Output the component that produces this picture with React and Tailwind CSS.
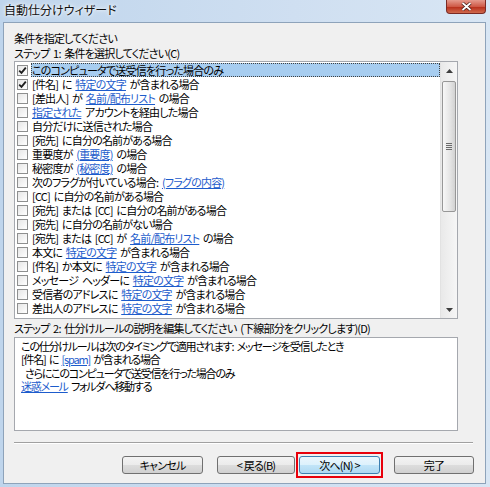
import React from "react";

const L = ({ children }) => (
  <span className="text-[#1d5ccc] underline decoration-[#1d5ccc] underline-offset-[1px]">{children}</span>
);

const conditions = [
  { checked: true, selected: true, text: <>このコンピュータで送受信を行った場合のみ</> },
  { checked: true, text: <>[件名] に <L>特定の文字</L> が含まれる場合</> },
  { text: <>[差出人] が <L>名前/配布リスト</L> の場合</> },
  { text: <><L>指定された</L> アカウントを経由した場合</> },
  { text: <>自分だけに送信された場合</> },
  { text: <>[宛先] に自分の名前がある場合</> },
  { text: <>重要度が <L>(重要度)</L> の場合</> },
  { text: <>秘密度が <L>(秘密度)</L> の場合</> },
  { text: <>次のフラグが付いている場合: <L>(フラグの内容)</L></> },
  { text: <>[CC] に自分の名前がある場合</> },
  { text: <>[宛先] または [CC] に自分の名前がある場合</> },
  { text: <>[宛先] に自分の名前がない場合</> },
  { text: <>[宛先] または [CC] が <L>名前/配布リスト</L> の場合</> },
  { text: <>本文に <L>特定の文字</L> が含まれる場合</> },
  { text: <>[件名] か本文に <L>特定の文字</L> が含まれる場合</> },
  { text: <>メッセージ ヘッダーに <L>特定の文字</L> が含まれる場合</> },
  { text: <>受信者のアドレスに <L>特定の文字</L> が含まれる場合</> },
  { text: <>差出人のアドレスに <L>特定の文字</L> が含まれる場合</> },
];

function CheckBox({ checked }) {
  return (
    <span className="ml-[2px] flex h-[11px] w-[11px] shrink-0 items-center justify-center border border-[#8e8f8f] bg-[linear-gradient(135deg,#e6e6e6,#ffffff)]">
      {checked && (
        <svg width="9" height="9" viewBox="0 0 9 9">
          <path d="M1.2 4.6 L3.5 6.9 L7.8 1.6" fill="none" stroke="#202020" strokeWidth="1.8" />
        </svg>
      )}
    </span>
  );
}

function Arrow({ up }) {
  return (
    <svg width="7" height="4" viewBox="0 0 7 4">
      <path d={up ? "M0 4 L3.5 0 L7 4 Z" : "M0 0 L3.5 4 L7 0 Z"} fill="#3d3d3d" />
    </svg>
  );
}

function ScrollBar() {
  return (
    <div className="flex w-[17px] shrink-0 flex-col border-l border-[#e2e2e2] bg-[linear-gradient(to_right,#e9e9e9,#f6f6f6)]">
      <div className="flex h-[17px] items-center justify-center">
        <Arrow up />
      </div>
      <div className="flex-1 px-[1px] pt-[2px]">
        <div className="flex h-[131px] flex-col items-center justify-center gap-[1px] rounded-[2px] border border-[#979797] bg-[linear-gradient(to_right,#f7f7f7,#e4e4e4_60%,#d2d2d2)]">
          {[0, 1, 2, 3].map((i) => (
            <span key={i} className="h-[1px] w-[6px] bg-[#6b6b6b]" />
          ))}
        </div>
      </div>
      <div className="flex h-[17px] items-center justify-center">
        <Arrow />
      </div>
    </div>
  );
}

function Button({ children, width, primary }) {
  return (
    <button
      className={
        "flex h-[18px] items-center justify-center rounded-[3px] border text-[11px] leading-none text-black " +
        width +
        (primary
          ? " border-[#3c7fb1] bg-[linear-gradient(to_bottom,#ebf6fd_0%,#dcf1fc_50%,#c2e5f8_50%,#aed9f2_100%)]"
          : " border-[#707070] bg-[linear-gradient(to_bottom,#f3f3f3_0%,#ebebeb_50%,#dddddd_50%,#d0d0d0_100%)]")
      }
    >
      {children}
    </button>
  );
}

export default function App() {
  return (
    <div className="flex h-[487px] w-[490px] flex-col bg-[linear-gradient(to_right,#bfd5ec,#cfdff1_60%,#d8e6f4)] font-['Noto_Sans_CJK_JP','Noto_Sans_CJK_SC',sans-serif] text-[11px] tracking-[-0.8px] text-black [font-feature-settings:'palt'] [word-spacing:2px]">
      {/* title bar */}
      <div className="flex h-[22px] items-start justify-between">
        <div className="pl-[4px] pt-[3px] text-[12px] leading-[14px] tracking-normal text-[#111] [text-shadow:0_0_6px_#ffffff,0_0_3px_#ffffff]">
          自動仕分けウィザード
        </div>
        <div className="mr-[4px] flex h-[14px] w-[40px] items-center justify-center rounded-b-[4px] border border-t-0 border-[#7a2a24] bg-[linear-gradient(to_bottom,#e59a8d,#cf5a47_50%,#b9301c_55%,#cf6a4e)]">
          <svg width="11" height="9" viewBox="0 0 11 9">
            <path d="M1.5 1 L9.5 8 M9.5 1 L1.5 8" stroke="#3b1410" strokeWidth="3.2" />
            <path d="M1.5 1 L9.5 8 M9.5 1 L1.5 8" stroke="#ffffff" strokeWidth="1.8" />
          </svg>
        </div>
      </div>

      {/* client area */}
      <div className="mb-[3px] ml-[3px] mr-[4px] flex flex-1 flex-col border border-[#8ea3ba] bg-[#f0f0f0] pb-[8px] pl-[10px] pr-[11px] pt-[8px]">
        <div className="h-[15px] leading-[15px]">条件を指定してください</div>
        <div className="h-[15px] leading-[15px]">ステップ 1: 条件を選択してください(C)</div>

        <div className="flex h-[258px] w-[444px] border border-[#a5a8ae] bg-white">
          <div className="flex-1 overflow-hidden pt-[1px]">
            {conditions.map((c, i) => (
              <div key={i} className="flex h-[14px] items-center">
                <CheckBox checked={c.checked} />
                <div
                  className={
                    "ml-[3px] h-[14px] flex-1 whitespace-nowrap pl-[1px] leading-[14px] " +
                    (c.selected ? "bg-[#a7cdf0] outline-1 outline-dotted outline-[#404040] -outline-offset-1" : "")
                  }
                >
                  {c.text}
                </div>
              </div>
            ))}
          </div>
          <ScrollBar />
        </div>

        <div className="h-[18px] leading-[18px]">ステップ 2: 仕分けルールの説明を編集してください (下線部分をクリックします)(D)</div>

        <div className="h-[94px] w-[444px] border border-[#a5a8ae] bg-white px-[6px] pt-[2px] leading-[13.3px] tracking-[-1.2px]">
          <div>この仕分けルールは次のタイミングで適用されます: メッセージを受信したとき</div>
          <div>
            [件名] に <L>[spam]</L> が含まれる場合
          </div>
          <div className="pl-[4px]">さらにこのコンピュータで送受信を行った場合のみ</div>
          <div>
            <L>迷惑メール</L> フォルダへ移動する
          </div>
        </div>

        <div className="mr-[1px] mt-[11px] h-[2px] border-b border-t border-b-white border-t-[#a0a0a0]" />

        <div className="mt-[12px] flex justify-end">
          <Button width="w-[81px]">キャンセル</Button>
          <div className="ml-[14px]">
            <Button width="w-[78px]">&lt; 戻る(B)</Button>
          </div>
          <div className="-my-[4px] ml-[1px] border-2 border-[#e8000b] px-[1px] py-[2px]">
            <Button width="w-[81px]" primary>
              次へ(N) &gt;
            </Button>
          </div>
          <div className="ml-[11px]">
            <Button width="w-[80px]">完了</Button>
          </div>
        </div>
      </div>
    </div>
  );
}
